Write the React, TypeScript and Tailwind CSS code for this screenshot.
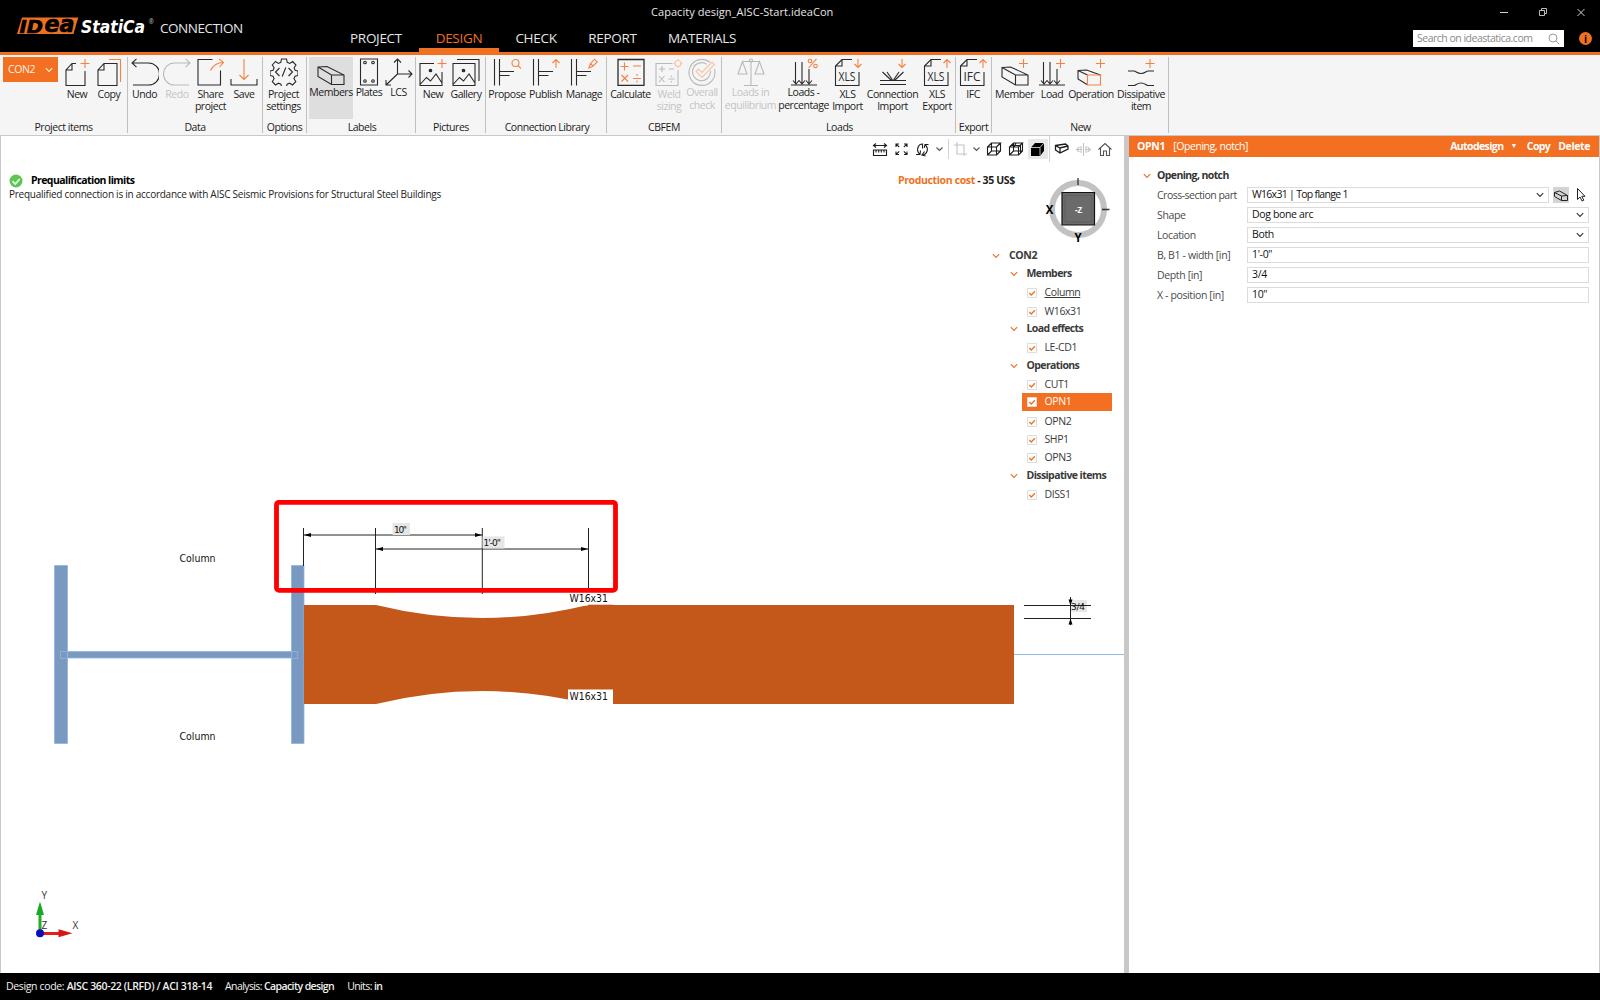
import React from 'react';

type IconProps = { children: React.ReactNode; dim?: boolean };

// 28x28 drawing area shared by all ribbon icons
const Icon = ({ children, dim }: IconProps) => (
  <svg
    viewBox="0 0 28 28"
    className={`mt-px block h-7 w-7 shrink-0 ${dim ? 'text-[#b9b9b9]' : 'text-[#2a2a2a]'}`}
    fill="none"
    stroke="currentColor"
    strokeWidth="1.1"
  >
    {children}
  </svg>
);

const OR = '#f58142';

const ArrowUp = ({ x = 23 }: { x?: number }) => (
  <path d={`M${x} 10V1.5M${x - 3.5} 5l3.5-3.5 3.5 3.5`} stroke={OR} />
);
const ArrowDown = ({ x = 23 }: { x?: number }) => (
  <path d={`M${x} 1v8.5M${x - 3.5} 6l3.5 3.5 3.5-3.5`} stroke={OR} />
);

const NewIcon = () => (
  <Icon>
    <path d="M13 5.5H9L3 12v15.5h19V13M9 5.5V12H3" />
    <path d="M17.5 5.5h9M22 1v9" stroke={OR} />
  </Icon>
);
const CopyIcon = () => (
  <Icon>
    <path d="M22 5.5H9L3 12v15.5h19zM9 5.5V12H3" />
    <path d="M14 1.5h11.5V24" stroke={OR} />
  </Icon>
);
const UndoIcon = () => (
  <Icon>
    <path d="M1 5h16.5a11 11 0 0 1 0 22H2M5.5 .8L1 5l4.5 4.2" />
  </Icon>
);
const RedoIcon = () => (
  <Icon dim>
    <path d="M27 5H11.5a11 11 0 0 0 0 22H26M22.5 .8L27 5l-4.5 4.2" />
  </Icon>
);
const ShareIcon = () => (
  <Icon>
    <path d="M15.5 1.5H1v25.5h22.5V12.5" />
    <path d="M13.5 12.5c2-4 6-8 13-8M22 .8l4.5 3.7-4 4.5" stroke={OR} />
  </Icon>
);
const SaveIcon = () => (
  <Icon>
    <path d="M1 21v6h26v-6" />
    <path d="M14 1v20.5M9.5 17l4.5 4.5 4.5-4.5" stroke={OR} />
  </Icon>
);
const SettingsIcon = () => (
  <Icon>
    <path d="M11.5 1h5l.7 3.3 2.6 1.1 2.9-1.9 3.3 3.5-1.9 2.8 1 2.5 2.9.7v4.5l-3 .8-1 2.5 1.8 2.9-3.3 3.3-2.8-1.8-2.6 1-.8 3.3h-4.6l-.8-3.3-2.5-1-2.9 1.8-3.2-3.3 1.8-2.9-1-2.5-3.1-.8v-4.5l3.1-.7 1-2.5-1.8-2.8 3.2-3.5 2.9 1.9 2.4-1.1z" />
    <path d="M9.5 10l-4 4 4 4M18.5 10l4 4-4 4M15.8 9.5l-3.6 9" />
  </Icon>
);
const MembersIcon = () => (
  <Icon>
    <path d="M1 9l9-.5 17 8.5v9.5H14.5L1 18.5zM1 9l13.5 8H27M14.5 17v9.5" />
  </Icon>
);
const PlatesIcon = () => (
  <Icon>
    <path d="M5.5 1h17v26h-17z" />
    <circle cx="10" cy="4.5" r="1.3" />
    <circle cx="18" cy="4.5" r="1.3" />
    <circle cx="10" cy="23" r="1.3" />
    <circle cx="18" cy="23" r="1.3" />
  </Icon>
);
const LcsIcon = () => (
  <Icon>
    <path d="M12.5 16V1M9 4.5L12.5 1 16 4.5M12.5 16H27M23.5 12.5L27 16l-3.5 3.5M12.5 16L1 27M1 22v5h5" />
  </Icon>
);
const PictureIcon = () => (
  <Icon>
    <path d="M15 5.5H1v22h22V14M1 26.5l6.5-7 4 3.5 5.5-7 6 9" />
    <circle cx="11.5" cy="12.5" r="1.3" fill="currentColor" />
    <path d="M18.5 5.5h9M23 1v9" stroke={OR} />
  </Icon>
);
const GalleryIcon = () => (
  <Icon>
    <path d="M1 5.5h22v22H1zM5 1.5h22V23M1 26.5l6.5-7 4 3.5 5.5-7 6 9" />
    <circle cx="11.5" cy="12.5" r="1.3" fill="currentColor" />
  </Icon>
);
const JointBase = () => <path d="M1.5 1v26.5M6.5 1v26.5M6.5 13.5H21M6.5 17.5h10" />;
const ProposeIcon = () => (
  <Icon>
    <JointBase />
    <circle cx="22.5" cy="5" r="3.5" stroke={OR} />
    <path d="M25 7.5l3 3" stroke={OR} />
  </Icon>
);
const PublishIcon = () => (
  <Icon>
    <JointBase />
    <ArrowUp x={24} />
  </Icon>
);
const ManageIcon = () => (
  <Icon>
    <JointBase />
    <path d="M19 10l1.5-4.5L24.5 1.2l2.7 2.7-4.5 4.5zM20.5 5.5l2.5 2.5" stroke={OR} />
  </Icon>
);
const CalculateIcon = () => (
  <Icon>
    <path d="M1 1.5h26v26H1z" strokeWidth="1.3" />
    <path
      d="M3.5 8.5h8M7.5 4.5v8M16 8h8M4.5 17l6.5 6.5M11 17l-6.5 6.5M16 20.5h8M20 16v2M20 22.5v2"
      stroke={OR}
    />
  </Icon>
);
const WeldIcon = () => (
  <Icon dim>
    <path d="M17.5 5.5H1v22h22V12M4 11h6M7 8v6M14 11h5M4 18l5.5 6M9.5 18L4 24M13.5 21h6M16.5 17.5v1.5M16.5 23v1.5" />
    <circle cx="23" cy="5.5" r="3" stroke="#f9c3a3" />
    <path d="M23 1v1.5M23 8.5V10M18.5 5.5H20M26 5.5h1.5" stroke="#f9c3a3" />
  </Icon>
);
const OverallIcon = () => (
  <Icon dim>
    <path d="M22 4.2A13 13 0 1 0 26.5 11M18.5 6.2A9 9 0 1 0 22.5 13" />
    <path d="M8 13.5l2.5-2.5 3.5 3.5L24 4l2.5 2.5L14 19.5z" stroke="#f9c3a3" />
  </Icon>
);
const EquilibriumIcon = () => (
  <Icon dim>
    <path d="M14 4v23.5M7 27.5h14M5.5 3.5H22.5M5.5 3.5L1 16h9zM22.5 3.5L18 16h9z" />
    <circle cx="14" cy="2.5" r="1.5" />
  </Icon>
);
const LoadArrows = () => (
  <path d="M1 27h26M5.5 4v22M12 4v22M19 11v15M3 22.5l3 3.5 3-3.5 3 3.5 3-3.5M16 22.5l3 3.5 3-3.5" />
);
const PercentIcon = () => (
  <Icon>
    <LoadArrows />
    <g stroke={OR}>
      <circle cx="20" cy="3" r="1.8" />
      <circle cx="25.5" cy="8" r="1.8" />
      <path d="M26.5 .8L18.5 10" />
    </g>
  </Icon>
);
const FileIcon = ({ text, down }: { text: string; down?: boolean }) => (
  <Icon>
    <path d="M18 1.5H8L1.5 8v19.5H25V14M8 1.5V8H1.5" />
    <text
      x="4.5"
      y="22.5"
      fill="currentColor"
      stroke="none"
      textLength="17"
      lengthAdjust="spacingAndGlyphs"
      className="font-['Open_Sans',sans-serif] text-[12px]"
    >
      {text}
    </text>
    {down ? <ArrowDown x={24} /> : <ArrowUp x={24} />}
  </Icon>
);
const ConnImportIcon = () => (
  <Icon>
    <path d="M1 22.5h26M1 26.5h26M3.5 14l9 8.5M8 14l5.5 8M14.5 22l5.5-8M15.5 22.5l9-8.5" />
    <ArrowDown x={23} />
  </Icon>
);
const MemberIcon = () => (
  <Icon>
    <path d="M1 9.5l8.5-.5L27 17v10H14.5L1 19zM1 9.5L14.5 17H27M14.5 17v10" />
    <path d="M18 5.5h9M22.5 1v9" stroke={OR} />
  </Icon>
);
const LoadIcon = () => (
  <Icon>
    <LoadArrows />
    <path d="M18 5.5h9M22.5 1v9" stroke={OR} />
  </Icon>
);
const OperationIcon = () => (
  <Icon>
    <path d="M10 26.5L1 21V12.5l8.5-.5 14 5M1 12.5l9.5 4.5" />
    <path d="M10.5 17h13v10h-13zM19 5.5h9M23.5 1v9" stroke={OR} />
  </Icon>
);
const DissipativeIcon = () => (
  <Icon>
    <path d="M1 13h6c2 0 3 2.5 7 2.5s5-2.500 7-2.500h6M1 27.500h6c2 0 3-2.500 7-2.500s5 2.500 7 2.500h6" />
    <path d="M18.5 5.5h9M23 1v9" stroke={OR} />
  </Icon>
);

type Tool = { label: string; icon: React.ReactNode; width: string; dim?: boolean; active?: boolean; high?: boolean };

const RibbonButton = ({ label, icon, width, dim, active, high }: Tool) => (
  <button
    className={`flex h-[62px] shrink-0 flex-col items-center ${width} ${active ? 'bg-[#dedede]' : ''} ${
      dim ? 'text-[#c4c4c4]' : 'text-[#1c1c1c]'
    }`}
  >
    {icon}
    <span
      className={`text-center text-[10.5px] leading-[12.5px] tracking-[-0.45px] whitespace-pre ${
        high ? '' : 'mt-[1.5px]'
      }`}
    >
      {label}
    </span>
  </button>
);

const groups: { title: string; width: string; tools: Tool[] }[] = [
  {
    title: 'Project items',
    width: 'w-[128px]',
    tools: [
      { label: 'New', icon: <NewIcon />, width: 'w-8' },
      { label: 'Copy', icon: <CopyIcon />, width: 'w-8' },
    ],
  },
  {
    title: 'Data',
    width: 'w-[135px]',
    tools: [
      { label: 'Undo', icon: <UndoIcon />, width: 'w-[33px]' },
      { label: 'Redo', icon: <RedoIcon />, width: 'w-8', dim: true },
      { label: 'Share\nproject', icon: <ShareIcon />, width: 'w-[35px]' },
      { label: 'Save', icon: <SaveIcon />, width: 'w-8' },
    ],
  },
  {
    title: 'Options',
    width: 'w-11',
    tools: [{ label: 'Project\nsettings', icon: <SettingsIcon />, width: 'w-[41px]' }],
  },
  {
    title: 'Labels',
    width: 'w-[109px] pl-0.5',
    tools: [
      { label: 'Members', icon: <MembersIcon />, width: 'w-11', active: true, high: true },
      { label: 'Plates', icon: <PlatesIcon />, width: 'w-8', high: true },
      { label: 'LCS', icon: <LcsIcon />, width: 'w-[27px]', high: true },
    ],
  },
  {
    title: 'Pictures',
    width: 'w-[70px] pl-px',
    tools: [
      { label: 'New', icon: <PictureIcon />, width: 'w-8' },
      { label: 'Gallery', icon: <GalleryIcon />, width: 'w-[34px]' },
    ],
  },
  {
    title: 'Connection Library',
    width: 'w-[121px] pl-0.5',
    tools: [
      { label: 'Propose', icon: <ProposeIcon />, width: 'w-[38px]' },
      { label: 'Publish', icon: <PublishIcon />, width: 'w-[39px]' },
      { label: 'Manage', icon: <ManageIcon />, width: 'w-[38px]' },
    ],
  },
  {
    title: 'CBFEM',
    width: 'w-[115px]',
    tools: [
      { label: 'Calculate', icon: <CalculateIcon />, width: 'w-[47px]' },
      { label: 'Weld\nsizing', icon: <WeldIcon />, width: 'w-[30px]', dim: true },
      { label: 'Overall\ncheck', icon: <OverallIcon />, width: 'w-9', dim: true, high: true },
    ],
  },
  {
    title: 'Loads',
    width: 'w-[234px] pl-0.5',
    tools: [
      { label: 'Loads in\nequilibrium', icon: <EquilibriumIcon />, width: 'w-[53px]', dim: true, high: true },
      { label: 'Loads -\npercentage', icon: <PercentIcon />, width: 'w-[53px]', high: true },
      { label: 'XLS\nImport', icon: <FileIcon text="XLS" down />, width: 'w-[35px]' },
      { label: 'Connection\nImport', icon: <ConnImportIcon />, width: 'w-[55px]' },
      { label: 'XLS\nExport', icon: <FileIcon text="XLS" />, width: 'w-[34px]' },
    ],
  },
  {
    title: 'Export',
    width: 'w-9',
    tools: [{ label: 'IFC', icon: <FileIcon text="IFC" />, width: 'w-[34px]' }],
  },
  {
    title: 'New',
    width: 'w-[177px] pl-px',
    tools: [
      { label: 'Member', icon: <MemberIcon />, width: 'w-[43px]' },
      { label: 'Load', icon: <LoadIcon />, width: 'w-8' },
      { label: 'Operation', icon: <OperationIcon />, width: 'w-[46px]' },
      { label: 'Dissipative\nitem', icon: <DissipativeIcon />, width: 'w-[54px]' },
    ],
  },
];

const Chevron = ({ className = '' }: { className?: string }) => (
  <svg viewBox="0 0 8 6" className={`h-1.5 w-2 shrink-0 ${className}`} fill="none" stroke="currentColor" strokeWidth="1.1">
    <path d="M.8 1.2L4 4.5l3.2-3.3" />
  </svg>
);

const tabs = [
  { label: 'PROJECT', width: 'w-[86px]' },
  { label: 'DESIGN', width: 'w-20', active: true },
  { label: 'CHECK', width: 'w-[74px]' },
  { label: 'REPORT', width: 'w-[79px]' },
  { label: 'MATERIALS', width: 'w-[100px]' },
];

const Logo = () => (
  <svg viewBox="0 -10 140 40" className="mt-[5px] ml-4 h-10 w-[140px] shrink-0 overflow-visible">
    <path d="M6 2.5h56.500l-1.500 4L57.500 19H1z" fill="#f07021" />
    <g fill="#000" stroke="#000" strokeWidth="0.7" className="font-['DejaVu_Sans',sans-serif] font-bold italic">
      <text x="3.5" y="17.5" textLength="23.5" lengthAdjust="spacingAndGlyphs" className="text-[18.5px]">
        ID
      </text>
      <text x="28.5" y="17.3" textLength="30" lengthAdjust="spacingAndGlyphs" className="text-[23px]">
        ea
      </text>
    </g>
    <text
      x="65"
      y="18"
      textLength="64"
      lengthAdjust="spacingAndGlyphs"
      fill="#fff"
      className="font-['DejaVu_Sans',sans-serif] text-[17px] font-bold italic"
    >
      StatiCa
    </text>
    <text x="132.5" y="9" fill="#bbb" className="font-['Open_Sans',sans-serif] text-[6.5px]">
      ®
    </text>
  </svg>
);

const Header = () => (
  <header className="flex h-[52px] bg-black text-[#e6e6e6]">
    <div className="flex w-[333px] shrink-0">
      <Logo />
      <span className="mt-[18px] ml-1 text-[13.5px] leading-[21px] tracking-[-0.45px]">CONNECTION</span>
    </div>
    <div className="flex flex-col justify-between">
      <div className="pt-1 pl-[318px] text-[11px] leading-4 tracking-[0.05px]">Capacity design_AISC-Start.ideaCon</div>
      <nav className="flex">
        {tabs.map((t) => (
          <div
            key={t.label}
            className={`flex h-6 justify-center border-b-4 text-[13.5px] leading-5 tracking-[-0.3px] ${t.width} ${
              t.active ? 'border-[#f07021] text-[#f07021]' : 'border-transparent'
            }`}
          >
            {t.label}
          </div>
        ))}
      </nav>
    </div>
    <div className="ml-auto flex flex-col items-end">
      <svg viewBox="0 0 100 16" className="mt-1 mr-3 h-4 w-[100px]" fill="none" stroke="#d0d0d0">
        <path d="M12 8.5h8M89.5 5l7 7M96.5 5l-7 7" />
        <path d="M51.5 6.5h5v5h-5zM53.5 6.5v-2h5v5h-2" strokeWidth="0.9" />
      </svg>
      <div className="mt-2.5 flex items-center">
        <div className="flex h-[17px] w-[151px] items-center justify-between bg-white pt-px pr-1 pl-1 text-[10.5px] text-[#8a8a8a]">
          <span className="tracking-[-0.5px]">Search on ideastatica.com</span>
          <svg viewBox="0 0 12 12" className="h-3 w-3" fill="none" stroke="#9a9a9a">
            <circle cx="5" cy="5" r="4" />
            <path d="M8 8l3.2 3.2" />
          </svg>
        </div>
        <div className="mr-2 ml-[15px] flex h-[13px] w-[13px] items-center justify-center rounded-full bg-[#f07021] text-[10px] leading-none font-bold text-black">
          i
        </div>
      </div>
    </div>
  </header>
);

const Ribbon = () => (
  <div className="flex h-[84px] border-t-[3px] border-b border-t-[#f07021] border-b-[#c9c9c9] bg-[#f5f5f5] pt-0.5">
    {groups.map((g, i) => (
      <div key={g.title + i} className={`flex h-[76px] shrink-0 flex-col border-r border-[#c0c0c0] ${g.width}`}>
        <div className="flex">
          {i === 0 && (
            <button className="mr-[3px] ml-[3px] flex h-[25px] w-[55px] shrink-0 items-center justify-between bg-[#f36f21] pt-px pr-[5px] pl-[5px] text-[10.5px] tracking-[-0.4px] text-[#fff1e6]">
              CON2
              <Chevron />
            </button>
          )}
          {g.tools.map((t, k) => (
            <RibbonButton key={k} {...t} />
          ))}
        </div>
        <div className="mt-px text-center text-[10.5px] leading-[14px] tracking-[-0.45px] whitespace-nowrap text-[#1c1c1c]">
          {g.title}
        </div>
      </div>
    ))}
  </div>
);

const ViewToolbar = () => (
  <svg viewBox="868 136 256 27" className="h-[27px] w-64" fill="none" stroke="#1c1c1c" strokeWidth="1.1">
    <path d="M874 145.5h12M876 143.5l-2.5 2 2.5 2M884 143.5l2.5 2-2.5 2M873.5 150h13v5.5h-13zM876 150v2.5M878.7 150v2.5M881.3 150v2.5M884 150v2.5" />
    <path d="M896 147v-3h3M896.2 144.2l3 3M907 147v-3h-3M906.8 144.2l-3 3M896 151.5v3h3M896.2 154.3l3-3M907 151.5v3h-3M906.8 154.3l-3-3" />
    <path d="M916 154.5h4l.5-4M920 154.5c-4.500-4-2-10.500 2.500-10.500v4.500M928.500 144.500h-3.500l-.8 3.500M925 144.500c4.500 4 2 10.500-3 10.500l2.500-3.500M922 155l3.500 1" />
    <path d="M936.5 147.5l3 3 3-3M973.5 147.5l3 3 3-3" stroke="#555" />
    <path d="M948.5 139v20M1049.5 136v26" stroke="#d5d5d5" />
    <path d="M957 142v12h10M954 145h10v11" stroke="#c4c4c4" />
    <path d="M987.5 147h9v8h-9zM987.5 147l4-4h9l-4 4M1000.5 143v8l-4 4M991.5 143v8h9M991.5 151l-4 4" />
    <path d="M1009.5 147h9v8h-9zM1009.5 147l4-4h9l-4 4M1022.5 143v8l-4 4M1013.5 143v8h9M1013.5 151l-4 4M1011 145.5h9M1016 143l-2 4M1020.5 145v8" />
    <path d="M1028 139h20v20h-20z" fill="#e8e8e8" stroke="none" />
    <path d="M1031 147.5l4-4.5h9v8l-4 5h-9z" fill="#000" stroke="none" />
    <path d="M1031 147.5h9l4-4.5M1040 147.5v8" stroke="#e8e8e8" strokeWidth="0.8" />
    <path d="M1055.5 145.5l10-1.5 2.5 2v3l-8 4-4.5-3zM1055.5 145.5l4.5 2.5 8-2M1060 148v5" strokeWidth="1.3" />
    <path d="M1083.5 143v13M1077 149.5h5M1085 149.5h5M1079.5 147l-3 2.5 3 2.5M1087.5 147l3 2.500-3 2.500M1081 146v7M1086 146v7" stroke="#c4c4c4" />
    <path d="M1098.5 149.5l6.5-6 6.5 6M1100.5 148v7.5h3v-4.500h3v4.500h3V148" stroke="#555" />
  </svg>
);

const treeItems: { label: string; group?: boolean; selected?: boolean; underline?: boolean }[] = [
  { label: 'Members', group: true },
  { label: 'Column', underline: true },
  { label: 'W16x31' },
  { label: 'Load effects', group: true },
  { label: 'LE-CD1' },
  { label: 'Operations', group: true },
  { label: 'CUT1' },
  { label: 'OPN1', selected: true },
  { label: 'OPN2' },
  { label: 'SHP1' },
  { label: 'OPN3' },
  { label: 'Dissipative items', group: true },
  { label: 'DISS1' },
];

const Tree = () => (
  <div className="flex w-[132px] flex-col text-[10.5px] tracking-[-0.4px] text-[#3a3a3a]">
    <div className="flex h-[18.35px] items-center font-bold">
      <Chevron className="mr-[9px] text-[#f07021]" />
      CON2
    </div>
    {treeItems.map((t) =>
      t.group ? (
        <div
          key={t.label}
          className="flex h-[18.35px] items-center pl-[17.5px] font-bold tracking-[-0.6px] whitespace-nowrap"
        >
          <Chevron className="mr-[9px] text-[#f07021]" />
          {t.label}
        </div>
      ) : (
        <div key={t.label} className="h-[18.35px] pl-[30px]">
          <div
            className={`flex h-[18px] w-[90px] items-center gap-2 pl-[4.5px] ${
              t.selected ? 'bg-[#f36f21] text-white' : 'pt-0.5'
            }`}
          >
            <svg viewBox="0 0 10 10" className="h-2.5 w-2.5 shrink-0" fill="none">
              <path d="M.5 .5h9v9h-9z" fill="#fff" stroke="#dcdcdc" />
              <path d="M2.3 5l2 2 3.6-3.8" stroke="#f07021" strokeWidth="1.3" />
            </svg>
            <span className={t.underline ? 'underline' : ''}>{t.label}</span>
          </div>
        </div>
      ),
    )}
  </div>
);

const ViewCube = () => (
  <svg viewBox="1044 172 66 72" className="h-[72px] w-[66px] font-['Open_Sans',sans-serif] font-bold">
    <circle cx="1078" cy="209" r="26" fill="none" stroke="#c2c2c2" strokeWidth="6" />
    <path d="M1062 192.5h32.5v32.500H1062z" fill="#6b6b6b" stroke="#111" strokeWidth="1.2" />
    <path d="M1065 195.5h26.5v26.500H1065z" fill="none" stroke="#5a5a5a" strokeWidth="0.8" />
    <text x="1078.5" y="212.5" textAnchor="middle" fill="#fff" className="text-[8px]">
      -Z
    </text>
    <text x="1049.5" y="213.5" textAnchor="middle" className="text-[11.5px]">
      X
    </text>
    <text x="1078" y="241.5" textAnchor="middle" className="text-[11.5px]">
      Y
    </text>
    <path d="M1078 178v7M1102 209.5h7.500" stroke="#333" strokeWidth="1.3" />
  </svg>
);

// Plan view of the joint: column, reduced beam section and its dimensions
const Scene = () => (
  <svg
    viewBox="1 136 1123 837"
    className="absolute inset-0 h-[837px] w-[1123px] font-['DejaVu_Sans',sans-serif] text-[10px]"
    fill="#111"
  >
    <g fill="#7a99c1" stroke="#8fb4e3" strokeWidth="0.8">
      <path d="M54.5 565.5h13v178h-13zM291.5 565.5h12.5v178h-12.5zM67.5 651.5h224v6.5h-224z" />
      <path d="M60.5 651.5h7v7h-7zM291.5 651.5h6v7h-6z" fill="none" />
    </g>
    <path d="M304 605h72Q482 631 588 605h426v99H588Q482 678 376 704H304z" fill="#c4581a" />
    <path d="M1014 654.5h110" stroke="#92bfe0" />
    <path d="M568 592h45v13.5h-45zM568 689.5h45V705h-45z" fill="#fff" />
    <path d="M588 604.7h25v2h-25z" fill="#c4581a" />
    <text x="569.5" y="602" textLength="38.5" lengthAdjust="spacingAndGlyphs">
      W16x31
    </text>
    <text x="569.5" y="700" textLength="38.5" lengthAdjust="spacingAndGlyphs">
      W16x31
    </text>
    <text x="179.5" y="561.5" textLength="36" lengthAdjust="spacingAndGlyphs">
      Column
    </text>
    <text x="179.5" y="740" textLength="36" lengthAdjust="spacingAndGlyphs">
      Column
    </text>

    <path
      d="M303.5 528v38M375.5 528v66M482.3 528v66M588.5 528v63M304 535h178M375.5 549h213"
      stroke="#222"
      fill="none"
    />
    <path d="M304 535l7-2v4zM482 535l-7-2v4zM376 549l7-2v4zM588 549l-7-2v4z" fill="#000" />
    <path d="M392.5 523h17.5v12h-17.5zM482.5 536.5h22v12h-22z" fill="#e6e6e6" />
    <text x="394" y="532.5" textLength="13" className="text-[9px]">
      10"
    </text>
    <text x="483.5" y="545.5" textLength="17.5" className="text-[9px]">
      1'-0"
    </text>

    <path d="M1070 600h17v12h-17z" fill="#e6e6e6" />
    <path d="M1024 605.5h67M1024 618.5h67M1070.5 597v28" stroke="#222" />
    <path d="M1070.5 605.5l-2-6h4zM1070.5 618.5l-2 6h4z" fill="#000" />
    <text x="1071" y="609.5" textLength="14" className="text-[9px]">
      3/4
    </text>

    <rect x="276.5" y="502.3" width="339" height="88" rx="2.5" fill="none" stroke="#fe0000" strokeWidth="4.8" />

    <path d="M38.5 930V914h3v16z" fill="#1fae2b" />
    <path d="M40 901.5l4 13.5h-8z" fill="#17a824" />
    <path d="M43 932h16v3H43z" fill="#e02020" />
    <path d="M72.5 933.3l-14 4v-8z" fill="#d81616" />
    <circle cx="40" cy="933.3" r="4" fill="#0b0bc0" />
    <g fill="#333" className="font-['Open_Sans',sans-serif] text-[10px]">
      <text x="41.5" y="898.5">
        Y
      </text>
      <text x="41.5" y="929">
        Z
      </text>
      <text x="72.5" y="929">
        X
      </text>
    </g>
  </svg>
);

const Viewport = () => (
  <section className="relative w-[1124px] shrink-0 overflow-hidden border-l border-[#c9c9c9] bg-white">
    <Scene />
    <div className="relative flex justify-between">
      <div className="pt-[38px] pl-2 text-black">
        <div className="flex h-[14px] items-center gap-2">
          <svg viewBox="0 0 14 14" className="h-3.5 w-3.5">
            <circle cx="7" cy="7" r="6.5" fill="#5cc653" />
            <path d="M3.5 7.2L6.2 10l4.5-5" fill="none" stroke="#fff" strokeWidth="1.7" />
          </svg>
          <span className="text-[10.5px] font-bold tracking-[-0.57px]">Prequalification limits</span>
        </div>
        <p className="text-[10px] leading-[13px] tracking-[-0.25px] text-[#222]">
          Prequalified connection is in accordance with AISC Seismic Provisions for Structural Steel Buildings
        </p>
      </div>
      <div className="flex w-64 flex-col">
        <ViewToolbar />
        <div className="flex justify-between">
          <div className="mt-2.5 ml-[30px] text-[10.5px] leading-[14px] font-bold tracking-[-0.37px] whitespace-nowrap text-[#222]">
            <span className="text-[#f07021]">Production cost</span> - 35 US$
          </div>
          <div className="mt-[8.5px] mr-3.5">
            <ViewCube />
          </div>
        </div>
        <div className="mt-[3px] flex justify-end">
          <Tree />
        </div>
      </div>
    </div>
  </section>
);

const SmallMember = () => (
  <svg viewBox="0 0 16 16" className="h-4 w-4 bg-[#d4d4d4]" fill="none" stroke="#222">
    <path d="M1.5 5.5l5-1.5 8 4.5v5h-6l-7-4zM1.5 5.5l7 3.5 6-.5M8.5 9v4.5" />
  </svg>
);
const Cursor = () => (
  <svg viewBox="0 0 12 16" className="h-4 w-3" fill="none" stroke="#222">
    <path d="M2.5 1.5v11l2.5-2.5 2 4 1.8-.8-2-3.900h3.200z" />
  </svg>
);

const fields = [
  {
    label: 'Cross-section part',
    value: 'W16x31 | Top flange 1',
    tracking: 'tracking-[-0.7px]',
    labelTracking: 'tracking-[-0.5px]',
    select: true,
    pick: true,
  },
  { label: 'Shape', value: 'Dog bone arc', select: true },
  { label: 'Location', value: 'Both', select: true },
  { label: 'B, B1 - width [in]', value: '1\'-0"' },
  { label: 'Depth [in]', value: '3/4' },
  { label: 'X - position [in]', value: '10"' },
];

const Properties = () => (
  <aside className="flex-1 border-r border-[#c9c9c9] bg-white text-[10.5px]">
    <div className="flex h-[21px] items-center bg-[#f36f21] pr-[9px] pl-2 tracking-[-0.6px] text-white">
      <b className="tracking-[-0.3px]">OPN1</b>
      <span className="ml-2 tracking-[-0.45px]">[Opening, notch]</span>
      <b className="ml-auto">Autodesign</b>
      <span className="ml-[7px] text-[7px]">▼</span>
      <b className="ml-2.5">Copy</b>
      <b className="ml-2 tracking-[-0.4px]">Delete</b>
    </div>
    <div className="mt-[11px] flex h-[15px] items-center pl-3.5 font-bold tracking-[-0.6px] text-[#333]">
      <Chevron className="mr-1.5 text-[#f07021]" />
      Opening, notch
    </div>
    <div className="mt-1 flex flex-col gap-1 pr-2.5 pl-7">
      {fields.map((f) => (
        <div key={f.label} className="flex h-4 items-center">
          <span
            className={`w-[90px] shrink-0 pt-0.5 whitespace-nowrap text-[#4a4a4a] ${
              f.labelTracking ?? 'tracking-[-0.37px]'
            }`}
          >
            {f.label}
          </span>
          <div
            className={`flex h-4 flex-1 items-center justify-between border border-[#dcdcdc] pr-1 pl-1 text-[#111] ${
              f.tracking ?? 'tracking-[-0.35px]'
            }`}
          >
            {f.value}
            {f.select && <Chevron className="text-[#333]" />}
          </div>
          {f.pick && (
            <div className="ml-1 flex w-9 gap-1.5">
              <SmallMember />
              <Cursor />
            </div>
          )}
        </div>
      ))}
    </div>
  </aside>
);

export default function App() {
  return (
    <div className="flex h-[1000px] w-[1600px] flex-col overflow-hidden bg-white font-['Open_Sans','Noto_Sans',sans-serif]">
      <Header />
      <Ribbon />
      <main className="flex h-[837px]">
        <Viewport />
        <div className="w-[5px] shrink-0 bg-[#c8c8c8]" />
        <Properties />
      </main>
      <footer className="flex h-[27px] items-center gap-[13px] bg-black pt-px pl-1.5 text-[10.5px] tracking-[-0.6px] text-[#f0f0f0]">
        <span className="tracking-[-0.35px]">
          Design code: <span className="font-semibold">AISC 360-22 (LRFD) / ACI 318-14</span>
        </span>
        <span>
          Analysis: <span className="font-semibold">Capacity design</span>
        </span>
        <span>
          Units: <span className="font-semibold">in</span>
        </span>
      </footer>
    </div>
  );
}
